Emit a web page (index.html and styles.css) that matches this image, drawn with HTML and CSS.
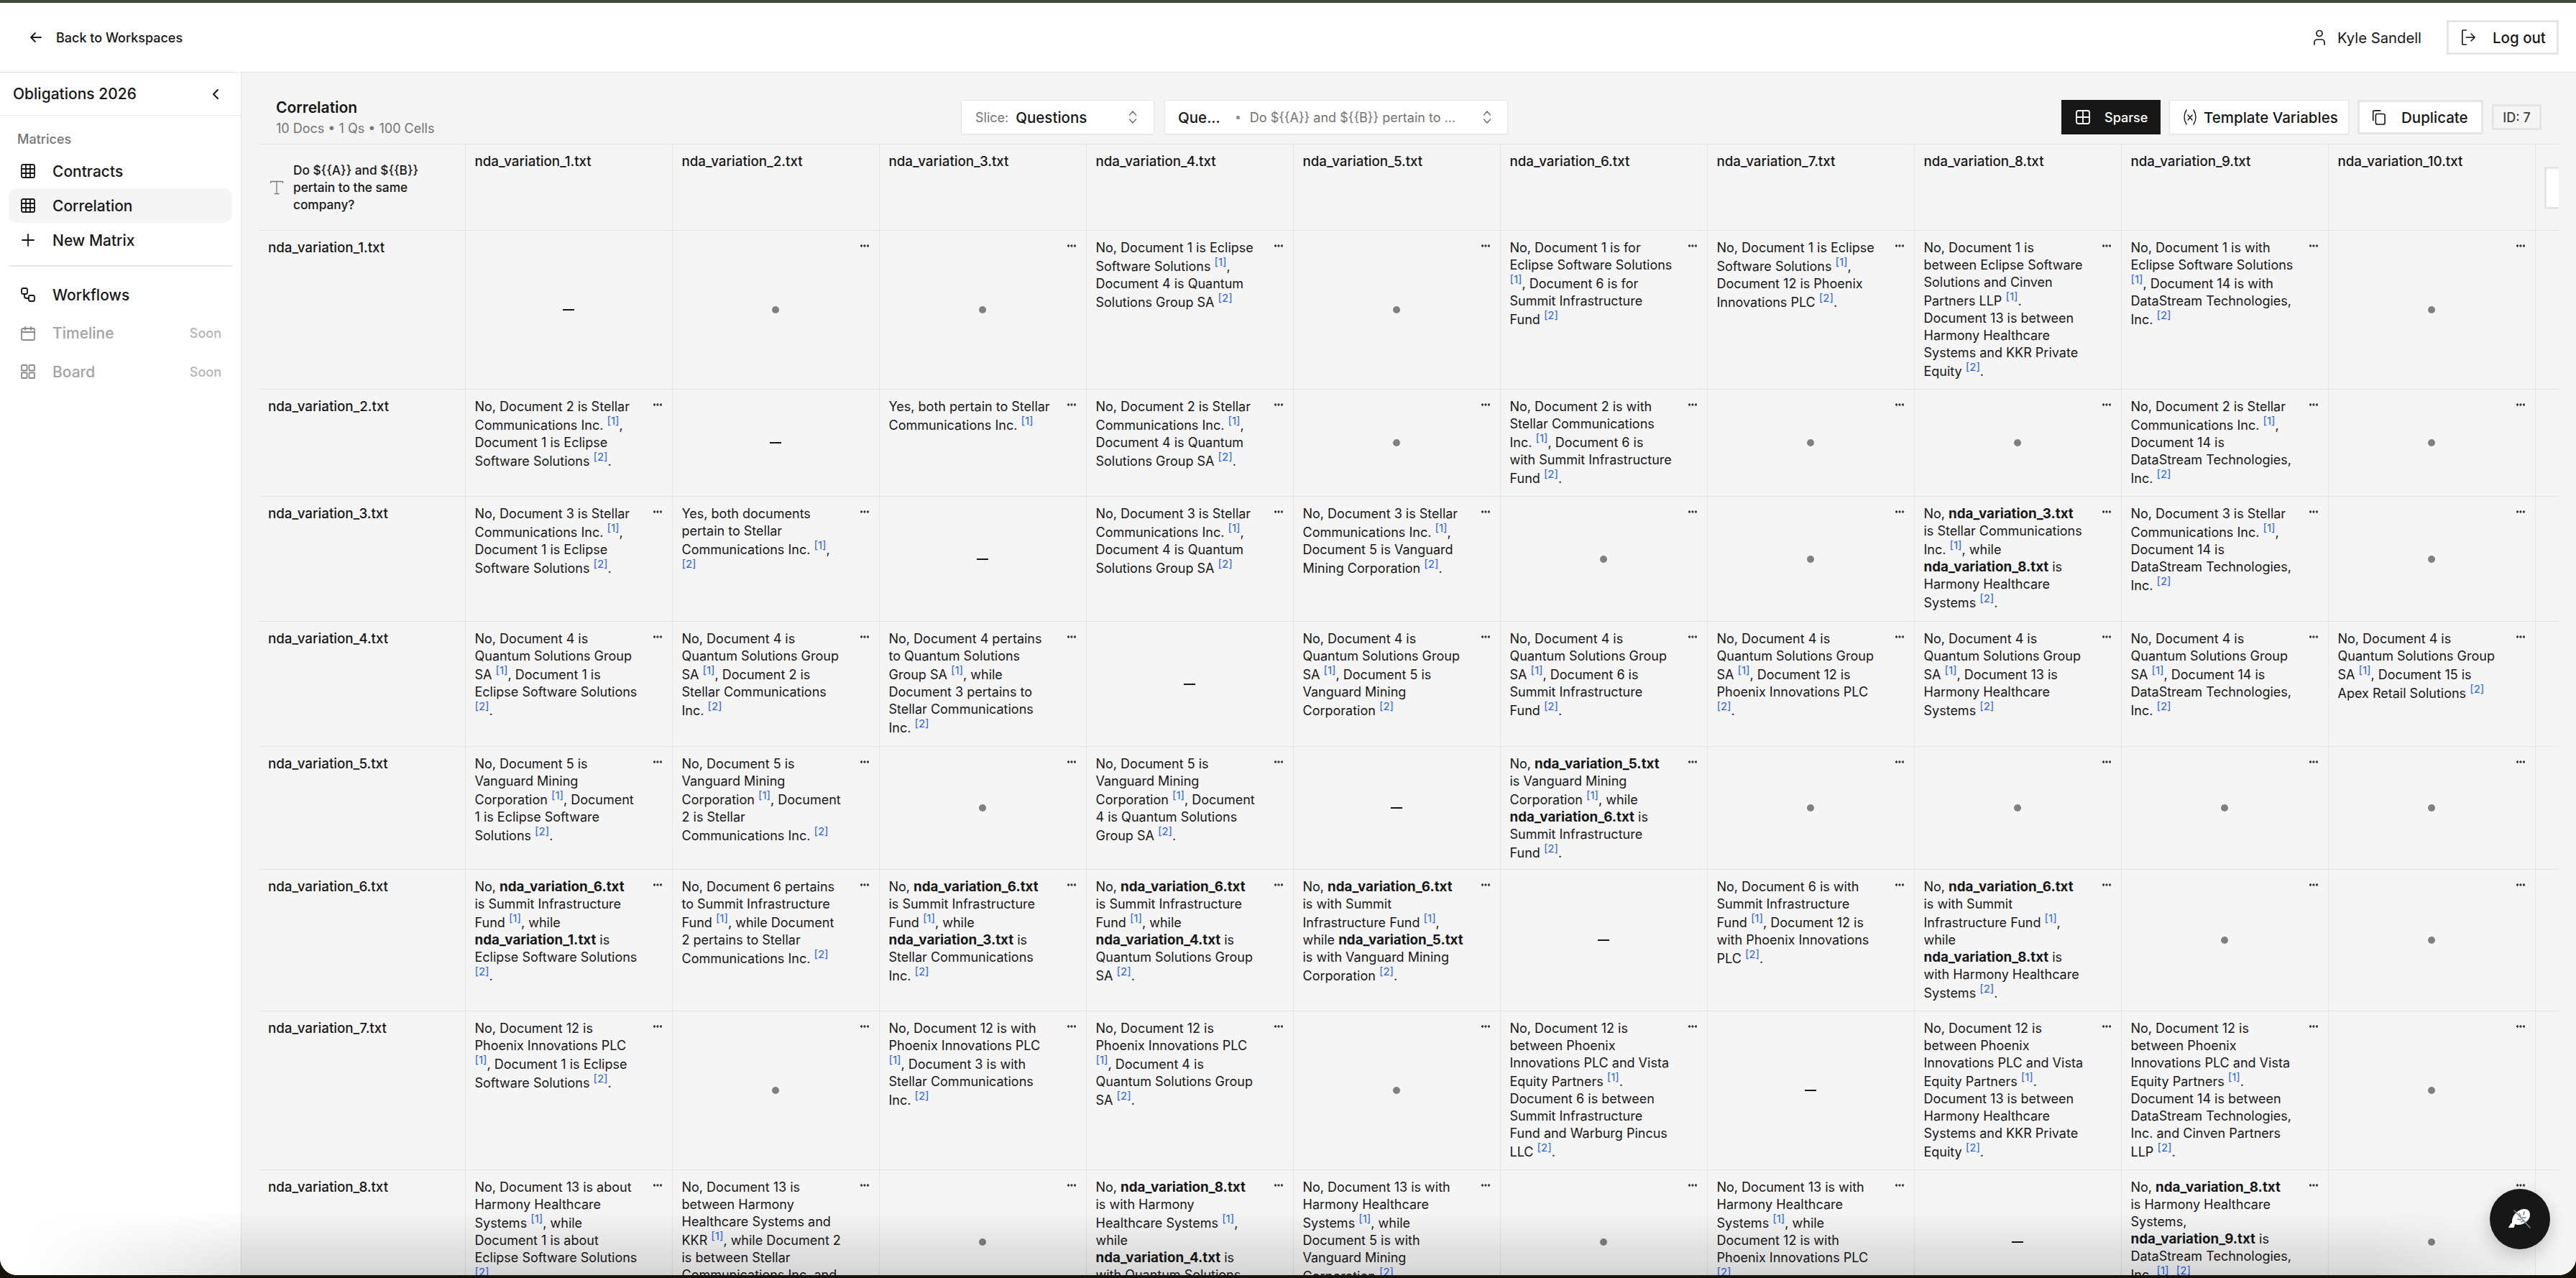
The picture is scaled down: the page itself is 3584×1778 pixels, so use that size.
FILE: index.html
```html
<!DOCTYPE html>
<html lang="en">
<head>
<meta charset="utf-8">
<title>Correlation</title>
<link rel="stylesheet" href="styles.css">
</head>
<body>
<svg class="defs" width="0" height="0" aria-hidden="true">
  <symbol id="i-grid3" viewBox="0 0 20 20"><rect x="1" y="1" width="18" height="18" rx="2"/><path d="M7 1v18M13 1v18M1 7h18M1 13h18"/></symbol>
  <symbol id="i-plus" viewBox="0 0 20 20"><path d="M10 2v16M2 10h16"/></symbol>
  <symbol id="i-flow" viewBox="0 0 20 20"><rect x="1" y="1" width="8" height="8" rx="2"/><rect x="11" y="11" width="8" height="8" rx="2"/><path d="M5 9v3a3 3 0 0 0 3 3h3"/></symbol>
  <symbol id="i-cal" viewBox="0 0 20 20"><rect x="1" y="3" width="18" height="16" rx="2"/><path d="M1 8h18M6 1v4M14 1v4"/></symbol>
  <symbol id="i-board" viewBox="0 0 20 20"><rect x="1" y="1" width="7.5" height="7.5" rx="1"/><rect x="11.5" y="1" width="7.5" height="7.5" rx="1"/><rect x="1" y="11.5" width="7.5" height="7.5" rx="1"/><rect x="11.5" y="11.5" width="7.5" height="7.5" rx="1"/></symbol>
  <symbol id="i-updown" viewBox="0 0 14 20"><path d="M2.5 7 7 2l4.500 5M2.500 13 7 18l4.500-5"/></symbol>
</svg>
<div class="window">
  <header class="topbar">
    <a class="back">
      <svg class="ic20" viewBox="0 0 20 20"><path d="M17 10H3M9 4l-6 6 6 6"/></svg>
      <span>Back to Workspaces</span>
    </a>
    <div class="account">
      <svg class="ic-user" viewBox="0 0 18 22"><circle cx="9" cy="5.500" r="4"/><path d="M2 21v-3a4 4 0 0 1 4-4h6a4 4 0 0 1 4 4v3"/></svg>
      <span class="user-name">Kyle Sandell</span>
      <button class="logout">
        <svg class="ic22" viewBox="0 0 22 26"><path d="M8 2H3.500A1.500 1.500 0 0 0 2 3.500v19A1.500 1.500 0 0 0 3.500 24H8M8 13h13M15.500 7.500 21 13l-5.500 5.500"/></svg>
        <span>Log out</span>
      </button>
    </div>
  </header>
  <div class="app">
    <aside class="sidebar">
      <div class="side-head">
        <span class="side-title">Obligations 2026</span>
        <svg class="ic-chev" viewBox="0 0 10 16"><path d="M8 2 2 8l6 6"/></svg>
      </div>
      <div class="side-label">Matrices</div>
      <nav class="nav">
        <a class="nav-item"><svg class="ic20"><use href="#i-grid3"/></svg><span>Contracts</span></a>
        <a class="nav-item active"><svg class="ic20"><use href="#i-grid3"/></svg><span>Correlation</span></a>
        <a class="nav-item"><svg class="ic20"><use href="#i-plus"/></svg><span>New Matrix</span></a>
      </nav>
      <div class="side-rule"></div>
      <nav class="nav nav-tools">
        <a class="nav-item"><svg class="ic20"><use href="#i-flow"/></svg><span>Workflows</span></a>
        <a class="nav-item off"><svg class="ic20"><use href="#i-cal"/></svg><span>Timeline</span><em>Soon</em></a>
        <a class="nav-item off"><svg class="ic20"><use href="#i-board"/></svg><span>Board</span><em>Soon</em></a>
      </nav>
    </aside>
    <main class="main">
      <div class="toolbar">
        <div class="title-block">
          <h1>Correlation</h1>
          <p>10 Docs • 1 Qs • 100 Cells</p>
        </div>
        <div class="selects">
          <div class="select s-slice"><span class="sel-label">Slice:</span><span class="sel-value">Questions</span><svg class="ic-ud"><use href="#i-updown"/></svg></div>
          <div class="select s-question"><span class="sel-value q-short">Que...</span><i class="sel-dot"></i><span class="sel-label q-text">Do ${{A}} and ${{B}} pertain to ...</span><svg class="ic-ud"><use href="#i-updown"/></svg></div>
        </div>
        <div class="actions">
          <button class="btn btn-dark"><svg class="ic20" viewBox="0 0 20 20"><rect x="1" y="1" width="18" height="18" rx="2.500"/><path d="M10 1v18M1 10h18"/></svg><span>Sparse</span></button>
          <button class="btn btn-vars"><svg class="ic-var" viewBox="0 0 20 24"><path d="M5 2C1 8 1 16 5 22M15 2c4 6 4 14 0 20M7 9l6 7M13 9l-6 7"/></svg><span>Template Variables</span></button>
          <button class="btn btn-dup"><svg class="ic22" viewBox="0 0 22 24"><path d="M3 17V4a2 2 0 0 1 2-2h9"/><rect x="7" y="7" width="14" height="16" rx="2.500"/></svg><span>Duplicate</span></button>
          <span class="id-tag">ID: 7</span>
        </div>
      </div>
      <div class="table-wrap">
        <table class="matrix">
          <colgroup><col class="c-head"><col class="c-cell"><col class="c-cell"><col class="c-cell"><col class="c-cell"><col class="c-cell"><col class="c-cell"><col class="c-cell"><col class="c-cell"><col class="c-cell"><col class="c-cell"><col class="c-add"></colgroup>
          <thead>
            <tr class="r0">
              <th class="q-head"><div class="q-wrap"><svg class="ic-t" viewBox="0 0 20 20"><path d="M1.500 4V1.500h17V4M10 1.500v17M6.500 18.500h7"/></svg><span>Do ${{A}} and ${{B}} pertain to the same company?</span></div></th>
              <th>nda_variation_1.txt</th><th>nda_variation_2.txt</th><th>nda_variation_3.txt</th><th>nda_variation_4.txt</th><th>nda_variation_5.txt</th><th>nda_variation_6.txt</th><th>nda_variation_7.txt</th><th>nda_variation_8.txt</th><th>nda_variation_9.txt</th><th>nda_variation_10.txt</th>
              <th class="add-col"><button class="add-btn"></button></th>
            </tr>
          </thead>
          <tbody>
            <tr class="r1">
              <th>nda_variation_1.txt</th>
              <td class="d"><i class="dash"></i></td>
              <td class="e"><i class="m"></i><i class="dot"></i></td>
              <td class="e"><i class="m"></i><i class="dot"></i></td>
              <td><i class="m"></i>No, Document 1 is Eclipse Software Solutions <sup>[1]</sup>, Document 4 is Quantum Solutions Group SA <sup>[2]</sup></td>
              <td class="e"><i class="m"></i><i class="dot"></i></td>
              <td><i class="m"></i>No, Document 1 is for Eclipse Software Solutions <sup>[1]</sup>, Document 6 is for Summit Infrastructure Fund <sup>[2]</sup></td>
              <td><i class="m"></i>No, Document 1 is Eclipse Software Solutions <sup>[1]</sup>, Document 12 is Phoenix Innovations PLC <sup>[2]</sup>.</td>
              <td><i class="m"></i>No, Document 1 is between Eclipse Software Solutions and Cinven Partners LLP <sup>[1]</sup>. Document 13 is between Harmony Healthcare Systems and KKR Private Equity <sup>[2]</sup>.</td>
              <td><i class="m"></i>No, Document 1 is with Eclipse Software Solutions <sup>[1]</sup>, Document 14 is with DataStream Technologies, Inc. <sup>[2]</sup></td>
              <td class="e"><i class="m"></i><i class="dot"></i></td>
              <td class="blank"></td>
            </tr>
            <tr class="r2">
              <th>nda_variation_2.txt</th>
              <td><i class="m"></i>No, Document 2 is Stellar Communications Inc. <sup>[1]</sup>, Document 1 is Eclipse Software Solutions <sup>[2]</sup>.</td>
              <td class="d"><i class="dash"></i></td>
              <td><i class="m"></i>Yes, both pertain to Stellar Communications Inc. <sup>[1]</sup></td>
              <td><i class="m"></i>No, Document 2 is Stellar Communications Inc. <sup>[1]</sup>, Document 4 is Quantum Solutions Group SA <sup>[2]</sup>.</td>
              <td class="e"><i class="m"></i><i class="dot"></i></td>
              <td><i class="m"></i>No, Document 2 is with Stellar Communications Inc. <sup>[1]</sup>, Document 6 is with Summit Infrastructure Fund <sup>[2]</sup>.</td>
              <td class="e"><i class="m"></i><i class="dot"></i></td>
              <td class="e"><i class="m"></i><i class="dot"></i></td>
              <td><i class="m"></i>No, Document 2 is Stellar Communications Inc. <sup>[1]</sup>, Document 14 is DataStream Technologies, Inc. <sup>[2]</sup></td>
              <td class="e"><i class="m"></i><i class="dot"></i></td>
              <td class="blank"></td>
            </tr>
            <tr class="r3">
              <th>nda_variation_3.txt</th>
              <td><i class="m"></i>No, Document 3 is Stellar Communications Inc. <sup>[1]</sup>, Document 1 is Eclipse Software Solutions <sup>[2]</sup>.</td>
              <td><i class="m"></i>Yes, both documents pertain to Stellar Communications Inc. <sup>[1]</sup>, <sup>[2]</sup></td>
              <td class="d"><i class="dash"></i></td>
              <td><i class="m"></i>No, Document 3 is Stellar Communications Inc. <sup>[1]</sup>, Document 4 is Quantum Solutions Group SA <sup>[2]</sup></td>
              <td><i class="m"></i>No, Document 3 is Stellar Communications Inc. <sup>[1]</sup>, Document 5 is Vanguard Mining Corporation <sup>[2]</sup>.</td>
              <td class="e"><i class="m"></i><i class="dot"></i></td>
              <td class="e"><i class="m"></i><i class="dot"></i></td>
              <td><i class="m"></i>No, <b>nda_variation_3.txt</b> is Stellar Communications Inc. <sup>[1]</sup>, while <b>nda_variation_8.txt</b> is Harmony Healthcare Systems <sup>[2]</sup>.</td>
              <td><i class="m"></i>No, Document 3 is Stellar Communications Inc. <sup>[1]</sup>, Document 14 is DataStream Technologies, Inc. <sup>[2]</sup></td>
              <td class="e"><i class="m"></i><i class="dot"></i></td>
              <td class="blank"></td>
            </tr>
            <tr class="r4">
              <th>nda_variation_4.txt</th>
              <td><i class="m"></i>No, Document 4 is Quantum Solutions Group SA <sup>[1]</sup>, Document 1 is Eclipse Software Solutions <sup>[2]</sup>.</td>
              <td><i class="m"></i>No, Document 4 is Quantum Solutions Group SA <sup>[1]</sup>, Document 2 is Stellar Communications Inc. <sup>[2]</sup></td>
              <td><i class="m"></i>No, Document 4 pertains to Quantum Solutions Group SA <sup>[1]</sup>, while Document 3 pertains to Stellar Communications Inc. <sup>[2]</sup></td>
              <td class="d"><i class="dash"></i></td>
              <td><i class="m"></i>No, Document 4 is Quantum Solutions Group SA <sup>[1]</sup>, Document 5 is Vanguard Mining Corporation <sup>[2]</sup></td>
              <td><i class="m"></i>No, Document 4 is Quantum Solutions Group SA <sup>[1]</sup>, Document 6 is Summit Infrastructure Fund <sup>[2]</sup>.</td>
              <td><i class="m"></i>No, Document 4 is Quantum Solutions Group SA <sup>[1]</sup>, Document 12 is Phoenix Innovations PLC <sup>[2]</sup>.</td>
              <td><i class="m"></i>No, Document 4 is Quantum Solutions Group SA <sup>[1]</sup>, Document 13 is Harmony Healthcare Systems <sup>[2]</sup></td>
              <td><i class="m"></i>No, Document 4 is Quantum Solutions Group SA <sup>[1]</sup>, Document 14 is DataStream Technologies, Inc. <sup>[2]</sup></td>
              <td><i class="m"></i>No, Document 4 is Quantum Solutions Group SA <sup>[1]</sup>, Document 15 is Apex Retail Solutions <sup>[2]</sup></td>
              <td class="blank"></td>
            </tr>
            <tr class="r5">
              <th>nda_variation_5.txt</th>
              <td><i class="m"></i>No, Document 5 is Vanguard Mining Corporation <sup>[1]</sup>, Document 1 is Eclipse Software Solutions <sup>[2]</sup>.</td>
              <td><i class="m"></i>No, Document 5 is Vanguard Mining Corporation <sup>[1]</sup>, Document 2 is Stellar Communications Inc. <sup>[2]</sup></td>
              <td class="e"><i class="m"></i><i class="dot"></i></td>
              <td><i class="m"></i>No, Document 5 is Vanguard Mining Corporation <sup>[1]</sup>, Document 4 is Quantum Solutions Group SA <sup>[2]</sup>.</td>
              <td class="d"><i class="dash"></i></td>
              <td><i class="m"></i>No, <b>nda_variation_5.txt</b> is Vanguard Mining Corporation <sup>[1]</sup>, while <b>nda_variation_6.txt</b> is Summit Infrastructure Fund <sup>[2]</sup>.</td>
              <td class="e"><i class="m"></i><i class="dot"></i></td>
              <td class="e"><i class="m"></i><i class="dot"></i></td>
              <td class="e"><i class="m"></i><i class="dot"></i></td>
              <td class="e"><i class="m"></i><i class="dot"></i></td>
              <td class="blank"></td>
            </tr>
            <tr class="r6">
              <th>nda_variation_6.txt</th>
              <td><i class="m"></i>No, <b>nda_variation_6.txt</b> is Summit Infrastructure Fund <sup>[1]</sup>, while <b>nda_variation_1.txt</b> is Eclipse Software Solutions <sup>[2]</sup>.</td>
              <td><i class="m"></i>No, Document 6 pertains to Summit Infrastructure Fund <sup>[1]</sup>, while Document 2 pertains to Stellar Communications Inc. <sup>[2]</sup></td>
              <td><i class="m"></i>No, <b>nda_variation_6.txt</b> is Summit Infrastructure Fund <sup>[1]</sup>, while <b>nda_variation_3.txt</b> is Stellar Communications Inc. <sup>[2]</sup></td>
              <td><i class="m"></i>No, <b>nda_variation_6.txt</b> is Summit Infrastructure Fund <sup>[1]</sup>, while <b>nda_variation_4.txt</b> is Quantum Solutions Group SA <sup>[2]</sup>.</td>
              <td><i class="m"></i>No, <b>nda_variation_6.txt</b> is with Summit Infrastructure Fund <sup>[1]</sup>, while <b>nda_variation_5.txt</b> is with Vanguard Mining Corporation <sup>[2]</sup>.</td>
              <td class="d"><i class="dash"></i></td>
              <td><i class="m"></i>No, Document 6 is with Summit Infrastructure Fund <sup>[1]</sup>, Document 12 is with Phoenix Innovations PLC <sup>[2]</sup>.</td>
              <td><i class="m"></i>No, <b>nda_variation_6.txt</b> is with Summit Infrastructure Fund <sup>[1]</sup>, while<br><b>nda_variation_8.txt</b> is with Harmony Healthcare Systems <sup>[2]</sup>.</td>
              <td class="e"><i class="m"></i><i class="dot"></i></td>
              <td class="e"><i class="m"></i><i class="dot"></i></td>
              <td class="blank"></td>
            </tr>
            <tr class="r7">
              <th>nda_variation_7.txt</th>
              <td><i class="m"></i>No, Document 12 is Phoenix Innovations PLC <sup>[1]</sup>, Document 1 is Eclipse Software Solutions <sup>[2]</sup>.</td>
              <td class="e"><i class="m"></i><i class="dot"></i></td>
              <td><i class="m"></i>No, Document 12 is with Phoenix Innovations PLC <sup>[1]</sup>, Document 3 is with Stellar Communications Inc. <sup>[2]</sup></td>
              <td><i class="m"></i>No, Document 12 is Phoenix Innovations PLC <sup>[1]</sup>, Document 4 is Quantum Solutions Group SA <sup>[2]</sup>.</td>
              <td class="e"><i class="m"></i><i class="dot"></i></td>
              <td><i class="m"></i>No, Document 12 is between Phoenix Innovations PLC and Vista Equity Partners <sup>[1]</sup>. Document 6 is between Summit Infrastructure Fund and Warburg Pincus LLC <sup>[2]</sup>.</td>
              <td class="d"><i class="dash"></i></td>
              <td><i class="m"></i>No, Document 12 is between Phoenix Innovations PLC and Vista Equity Partners <sup>[1]</sup>. Document 13 is between Harmony Healthcare Systems and KKR Private Equity <sup>[2]</sup>.</td>
              <td><i class="m"></i>No, Document 12 is between Phoenix Innovations PLC and Vista Equity Partners <sup>[1]</sup>. Document 14 is between DataStream Technologies, Inc. and Cinven Partners LLP <sup>[2]</sup>.</td>
              <td class="e"><i class="m"></i><i class="dot"></i></td>
              <td class="blank"></td>
            </tr>
            <tr class="r8">
              <th>nda_variation_8.txt</th>
              <td><i class="m"></i>No, Document 13 is about Harmony Healthcare Systems <sup>[1]</sup>, while Document 1 is about Eclipse Software Solutions <sup>[2]</sup>.</td>
              <td><i class="m"></i>No, Document 13 is between Harmony Healthcare Systems and KKR <sup>[1]</sup>, while Document 2 is between Stellar Communications Inc. and Cinven Partners <sup>[2]</sup>.</td>
              <td class="e"><i class="m"></i><i class="dot"></i></td>
              <td><i class="m"></i>No, <b>nda_variation_8.txt</b> is with Harmony Healthcare Systems <sup>[1]</sup>, while<br><b>nda_variation_4.txt</b> is with Quantum Solutions Group SA <sup>[2]</sup>.</td>
              <td><i class="m"></i>No, Document 13 is with Harmony Healthcare Systems <sup>[1]</sup>, while Document 5 is with Vanguard Mining Corporation <sup>[2]</sup>.</td>
              <td class="e"><i class="m"></i><i class="dot"></i></td>
              <td><i class="m"></i>No, Document 13 is with Harmony Healthcare Systems <sup>[1]</sup>, while Document 12 is with Phoenix Innovations PLC <sup>[2]</sup>.</td>
              <td class="d"><i class="dash"></i></td>
              <td><i class="m"></i>No, <b>nda_variation_8.txt</b> is Harmony Healthcare Systems, <b>nda_variation_9.txt</b> is DataStream Technologies, Inc. <sup>[1]</sup>, <sup>[2]</sup></td>
              <td class="e"><i class="m"></i><i class="dot"></i></td>
              <td class="blank"></td>
            </tr>
          </tbody>
        </table>
      </div>
    </main>
  </div>
  <div class="bottom-fade"></div>
  <button class="fab" aria-label="Assistant">
    <svg class="fab-ic" viewBox="0 0 32 32">
      <path class="fab-leaf" d="M5 21C4 12 12 3 21 2c6-.500 9 3 9 8 0 8-9 14-16 14-2 0-4-.500-5-1l-1 4c0 1-1 1-2 1l-5 0c-1 0-1-1-.500-1.500 1-1 2-2.500 2-3.500z"/>
      <path class="fab-ink" d="M8 4l22 24M15 8l2 4M22 6l-1 4M24 14l-5 0M13 16l4 1M18 20l2-1"/>
    </svg>
  </button>
</div>
</body>
</html>
```

FILE: styles.css
```css
* { box-sizing: border-box; }
html, body { margin: 0; height: 100%; }
body {
  overflow: hidden;
  background: linear-gradient(#3b4a39 0 4px, #17130d 4px);
  font-family: Inter, "Liberation Sans", sans-serif;
  color: #171717;
}
svg { fill: none; stroke: currentColor; stroke-width: 1.8; stroke-linecap: round; stroke-linejoin: round; flex: none; }
.defs { position: absolute; }
button { font: inherit; color: inherit; background: none; border: 0; padding: 0; }

.window {
  position: relative;
  height: 1770px;
  margin-top: 4px;
  display: flex;
  flex-direction: column;
  background: #fff;
  border-radius: 0 0 24px 24px;
  overflow: hidden;
}

/* top bar */
.topbar {
  flex: 0 0 97px;
  display: flex;
  align-items: center;
  justify-content: space-between;
  padding: 0 24px 0 40px;
  border-bottom: 1px solid #e5e5e5;
}
.back { display: flex; align-items: center; gap: 18px; font-size: 18px; font-weight: 500; }
.account { display: flex; align-items: center; }
.ic-user { width: 18px; height: 22px; stroke-width: 1.7; }
.user-name { margin: 0 35px 0 16px; font-size: 20.25px; }
.logout {
  display: flex; align-items: center; gap: 24px;
  width: 156px; height: 48px;
  padding-left: 17px;
  border: 3px solid #e5e5e5;
  background: #fff;
  font-size: 20.5px; font-weight: 500;
}
.ic20 { width: 20px; height: 20px; }
.ic22 { width: 20px; height: 24px; }

/* sidebar + main */
.app { flex: 1; display: flex; min-height: 0; }
.sidebar { flex: 0 0 336px; border-right: 1px solid #e5e5e5; background: #fff; }
.side-head {
  height: 60px;
  display: flex; align-items: center; justify-content: space-between;
  padding: 0 30px 0 18px;
  border-bottom: 1px solid #e5e5e5;
}
.side-title { font-size: 21px; font-weight: 500; }
.ic-chev { width: 10px; height: 16px; stroke-width: 2; }
.side-label { margin: 21px 0 8px 24px; font-size: 18px; font-weight: 500; color: #757575; line-height: 24px; }
.nav { margin: 0 12px; display: flex; flex-direction: column; }
.nav-item {
  display: flex; align-items: center; gap: 24px;
  height: 48px;
  padding: 0 15px 0 17px;
  font-size: 21px; font-weight: 500;
  border-radius: 12px;
}
.nav-item.active { background: #f5f5f5; }
.nav-item.off { color: #a3a3a3; }
.nav-item.off svg { color: #8a8a8a; }
.nav-item em { margin-left: auto; font-style: normal; font-size: 18px; font-weight: 500; color: #b5b5b5; }
.side-rule { height: 2px; margin: 11px 12px 15px; background: #e8e8e8; }
.nav-tools { gap: 5.5px; }

.main { flex: 1; min-width: 0; background: #f5f5f5; }
.toolbar { height: 99px; padding: 38px 48px 0; display: flex; align-items: flex-start; }
.title-block { flex: 0 0 953px; margin-top: -2px; }
.title-block h1 { margin: 0; font-size: 21px; font-weight: 600; line-height: 26px; }
.title-block p { margin: 4px 0 0; font-size: 18px; line-height: 24px; color: #737373; }
.selects { display: flex; gap: 14px; }
.select {
  display: flex; align-items: center;
  height: 48px;
  background: #fff;
  border: 1px solid #e5e5e5;
  box-shadow: 0 1px 2px rgba(0,0,0,.05);
  border-radius: 2px;
}
.s-slice { width: 269px; padding: 0 22px 0 19px; }
.s-question { width: 478px; padding: 0 21px 0 18px; }
.sel-label { font-size: 18px; color: #737373; }
.sel-value { font-size: 20.5px; font-weight: 500; margin-left: 10px; }
.q-short { margin-left: 0; }
.sel-dot { width: 5px; height: 5px; margin: 0 14px 0 22px; border-radius: 50%; background: #8a8a8a; }
.ic-ud { width: 14px; height: 20px; margin-left: auto; color: #666; stroke-width: 1.3; }
.actions { margin-left: auto; display: flex; align-items: flex-start; gap: 12px; }
.btn {
  display: flex; align-items: center;
  height: 48px;
  background: #fff;
  font-size: 20.5px; font-weight: 500;
}
.btn-dark { width: 138px; gap: 20px; padding-left: 20px; background: #171717; color: #fff; font-size: 18px; }
.btn-vars { width: 250px; gap: 9px; padding-left: 18px; border: 1px solid #e5e5e5; box-shadow: 0 1px 2px rgba(0,0,0,.06); }
.ic-var { width: 20px; height: 24px; stroke-width: 1.4; }
.btn-dup { width: 175px; gap: 22px; padding-left: 16px; border: 3px solid #e5e5e5; }
.id-tag {
  display: flex; align-items: center; justify-content: center;
  width: 69px; height: 36px; margin-top: 6px;
  border: 3px solid #e5e5e5;
  font-size: 18px; font-weight: 500; color: #404040;
}

/* matrix */
.table-wrap { margin: 0 24px; overflow: hidden; height: 1600px; }
.matrix {
  width: 3200px;
  table-layout: fixed;
  border-collapse: collapse;
  font-size: 18px;
  line-height: 24px;
}
.c-head { width: 287px; }
.c-cell { width: 288px; }
.c-add { width: 33px; }
.matrix th, .matrix td {
  position: relative;
  vertical-align: top;
  text-align: left;
  padding: 12px 13px 0;
  border: 1px solid #e4e4e4;
  border-left: 0;
  font-weight: 400;
}
.matrix th { font-weight: 500; font-size: 18.75px; }
.matrix td { padding-right: 48px; overflow-wrap: break-word; }
.matrix th:last-child, .matrix td:last-child { border-right: 0; }
.matrix tbody th { padding-left: 13px; }
.r0 { height: 120px; }
.r1 { height: 221px; }
.r2 { height: 149px; }
.r3 { height: 174px; }
.r4 { height: 174px; }
.r5 { height: 171px; }
.r6 { height: 197px; }
.r7 { height: 221px; }
.r8 { height: 200px; }
.matrix .q-head { vertical-align: middle; padding: 0 30px 0 15px; font-size: 17.25px; }
.q-wrap { display: flex; align-items: center; gap: 13px; }
.ic-t { width: 20px; height: 20px; color: #777; stroke-width: 1.3; stroke-linecap: butt; }
.matrix b { font-weight: 700; font-size: 18.75px; }
.matrix sup { font-size: 15px; line-height: 1; color: #2563eb; }
.matrix td.e, .matrix td.d { padding: 0; vertical-align: middle; text-align: center; }
.m {
  position: absolute; top: 19px; right: 14px;
  width: 12px; height: 4px;
  background: radial-gradient(circle at 1.500px 2px, #333 1.500px, transparent 1.800px) 0 0 / 4.500px 4px repeat-x;
}
.dot { display: block; width: 10px; height: 10px; margin: auto; border-radius: 50%; background: #808080; }
.dash { display: block; width: 16px; height: 2px; margin: auto; background: #171717; }
.add-btn {
  position: absolute; top: 31px; left: 12px;
  width: 40px; height: 59px;
  background: #fff;
  border: 3px solid #e5e5e5;
}
.add-btn::after {
  content: "";
  position: absolute; left: 17px; top: 30px;
  width: 4px; height: 3px;
  background: #333;
}

/* overlays */
.bottom-fade {
  position: absolute; left: 0; right: 0; bottom: 0;
  height: 90px;
  background: linear-gradient(rgba(0,0,0,0), rgba(0,0,0,.13));
  -webkit-mask-image: linear-gradient(to right, transparent 30px, #000 340px, #000 3300px, transparent 3570px);
  mask-image: linear-gradient(to right, transparent 30px, #000 340px, #000 3300px, transparent 3570px);
  pointer-events: none;
}
.fab {
  position: absolute; left: 3464px; top: 1650px;
  width: 84px; height: 84px;
  display: flex; align-items: center; justify-content: center;
  border-radius: 50%;
  background: #171717;
  box-shadow: 0 8px 24px rgba(0,0,0,.2);
}
.fab-ic { width: 32px; height: 32px; }
.fab-leaf { fill: #fff; stroke: none; }
.fab-ink { stroke: #7d8494; stroke-width: 1.6; }
```
